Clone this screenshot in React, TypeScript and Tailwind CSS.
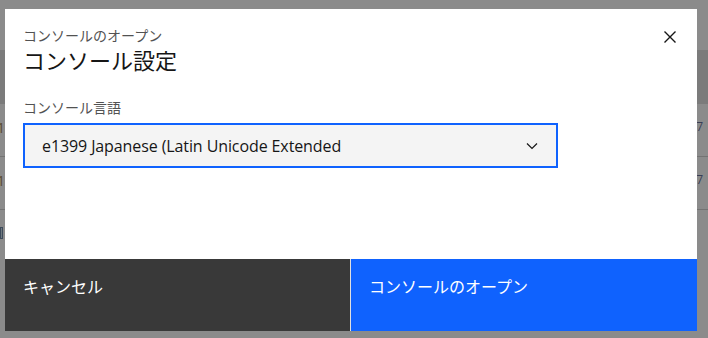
import React from "react";

const jp = { fontFamily: '"Noto Sans CJK JP", "Noto Sans", sans-serif' };
const latin = { fontFamily: '"Open Sans", "Noto Sans CJK JP", sans-serif' };

function BgRow({ last }: { last?: boolean }) {
  return (
    <div className={`h-[53px] flex items-center justify-between pb-[6px] ${last ? "" : "border-b border-[#737373]"}`}>
      <span className="text-[14px] text-[#5a4a30] -ml-[3px]" style={latin}>1</span>
      <span className="text-[12px] text-[#3a3f55] mr-[5px]" style={latin}>7</span>
    </div>
  );
}

export default function App() {
  return (
    <div className="relative w-[708px] h-[338px] overflow-hidden bg-[#8b8b8b]">
      {/* underlying page seen through overlay */}
      <div className="flex flex-col">
        <div className="h-[50px]" />
        <div className="h-[54px] bg-[#7b7b7b]" />
        <BgRow />
        <BgRow />
        <div className="h-[53px] flex items-start pt-[17px]">
          <div className="w-[3px] h-[12px] border border-[#3d4a5a] bg-[#6f7a80]" />
        </div>
      </div>

      {/* modal */}
      <div className="absolute left-[5px] top-[9px] w-[692px] h-[322px] bg-white flex flex-col">
        <div className="relative pl-[18px] pt-[17px] flex-1">
          <div className="text-[14px] leading-[18px] text-[#525252]" style={jp}>
            コンソールのオープン
          </div>
          <div className="mt-[1px] text-[22px] leading-[28px] text-[#161616]" style={jp}>
            コンソール設定
          </div>
          <div className="mt-[25px] text-[14px] leading-[18px] text-[#525252]" style={jp}>
            コンソール言語
          </div>
          <div className="mt-[7px] w-[535px] h-[45px] bg-[#f4f4f4] border-2 border-[#0f62fe] flex items-center justify-between pl-[17px] pr-[18px]">
            <span className="text-[16px] text-[#161616] tracking-[-0.1px]" style={latin}>
              e1399 Japanese (Latin Unicode Extended
            </span>
            <svg width="12" height="8" viewBox="0 0 12 8" fill="none">
              <path d="M1 1.5 L6 6.5 L11 1.5" stroke="#161616" strokeWidth="1.2" />
            </svg>
          </div>
          <button className="absolute right-[20px] top-[21px] w-[14px] h-[14px] flex items-center justify-center">
            <svg width="14" height="14" viewBox="0 0 14 14" fill="none">
              <path d="M1.5 1.5 L12.5 12.5 M12.5 1.5 L1.5 12.5" stroke="#161616" strokeWidth="1.4" />
            </svg>
          </button>
        </div>
        <div className="h-[72px] flex">
          <div className="w-[345px] bg-[#393939] text-white text-[16px] leading-[22px] pl-[18px] pt-[16px]" style={jp}>
            キャンセル
          </div>
          <div className="w-px bg-[#e0e0e0]" />
          <div className="flex-1 bg-[#0f62fe] text-white text-[16px] leading-[22px] pl-[18px] pt-[16px]" style={jp}>
            コンソールのオープン
          </div>
        </div>
      </div>
    </div>
  );
}
